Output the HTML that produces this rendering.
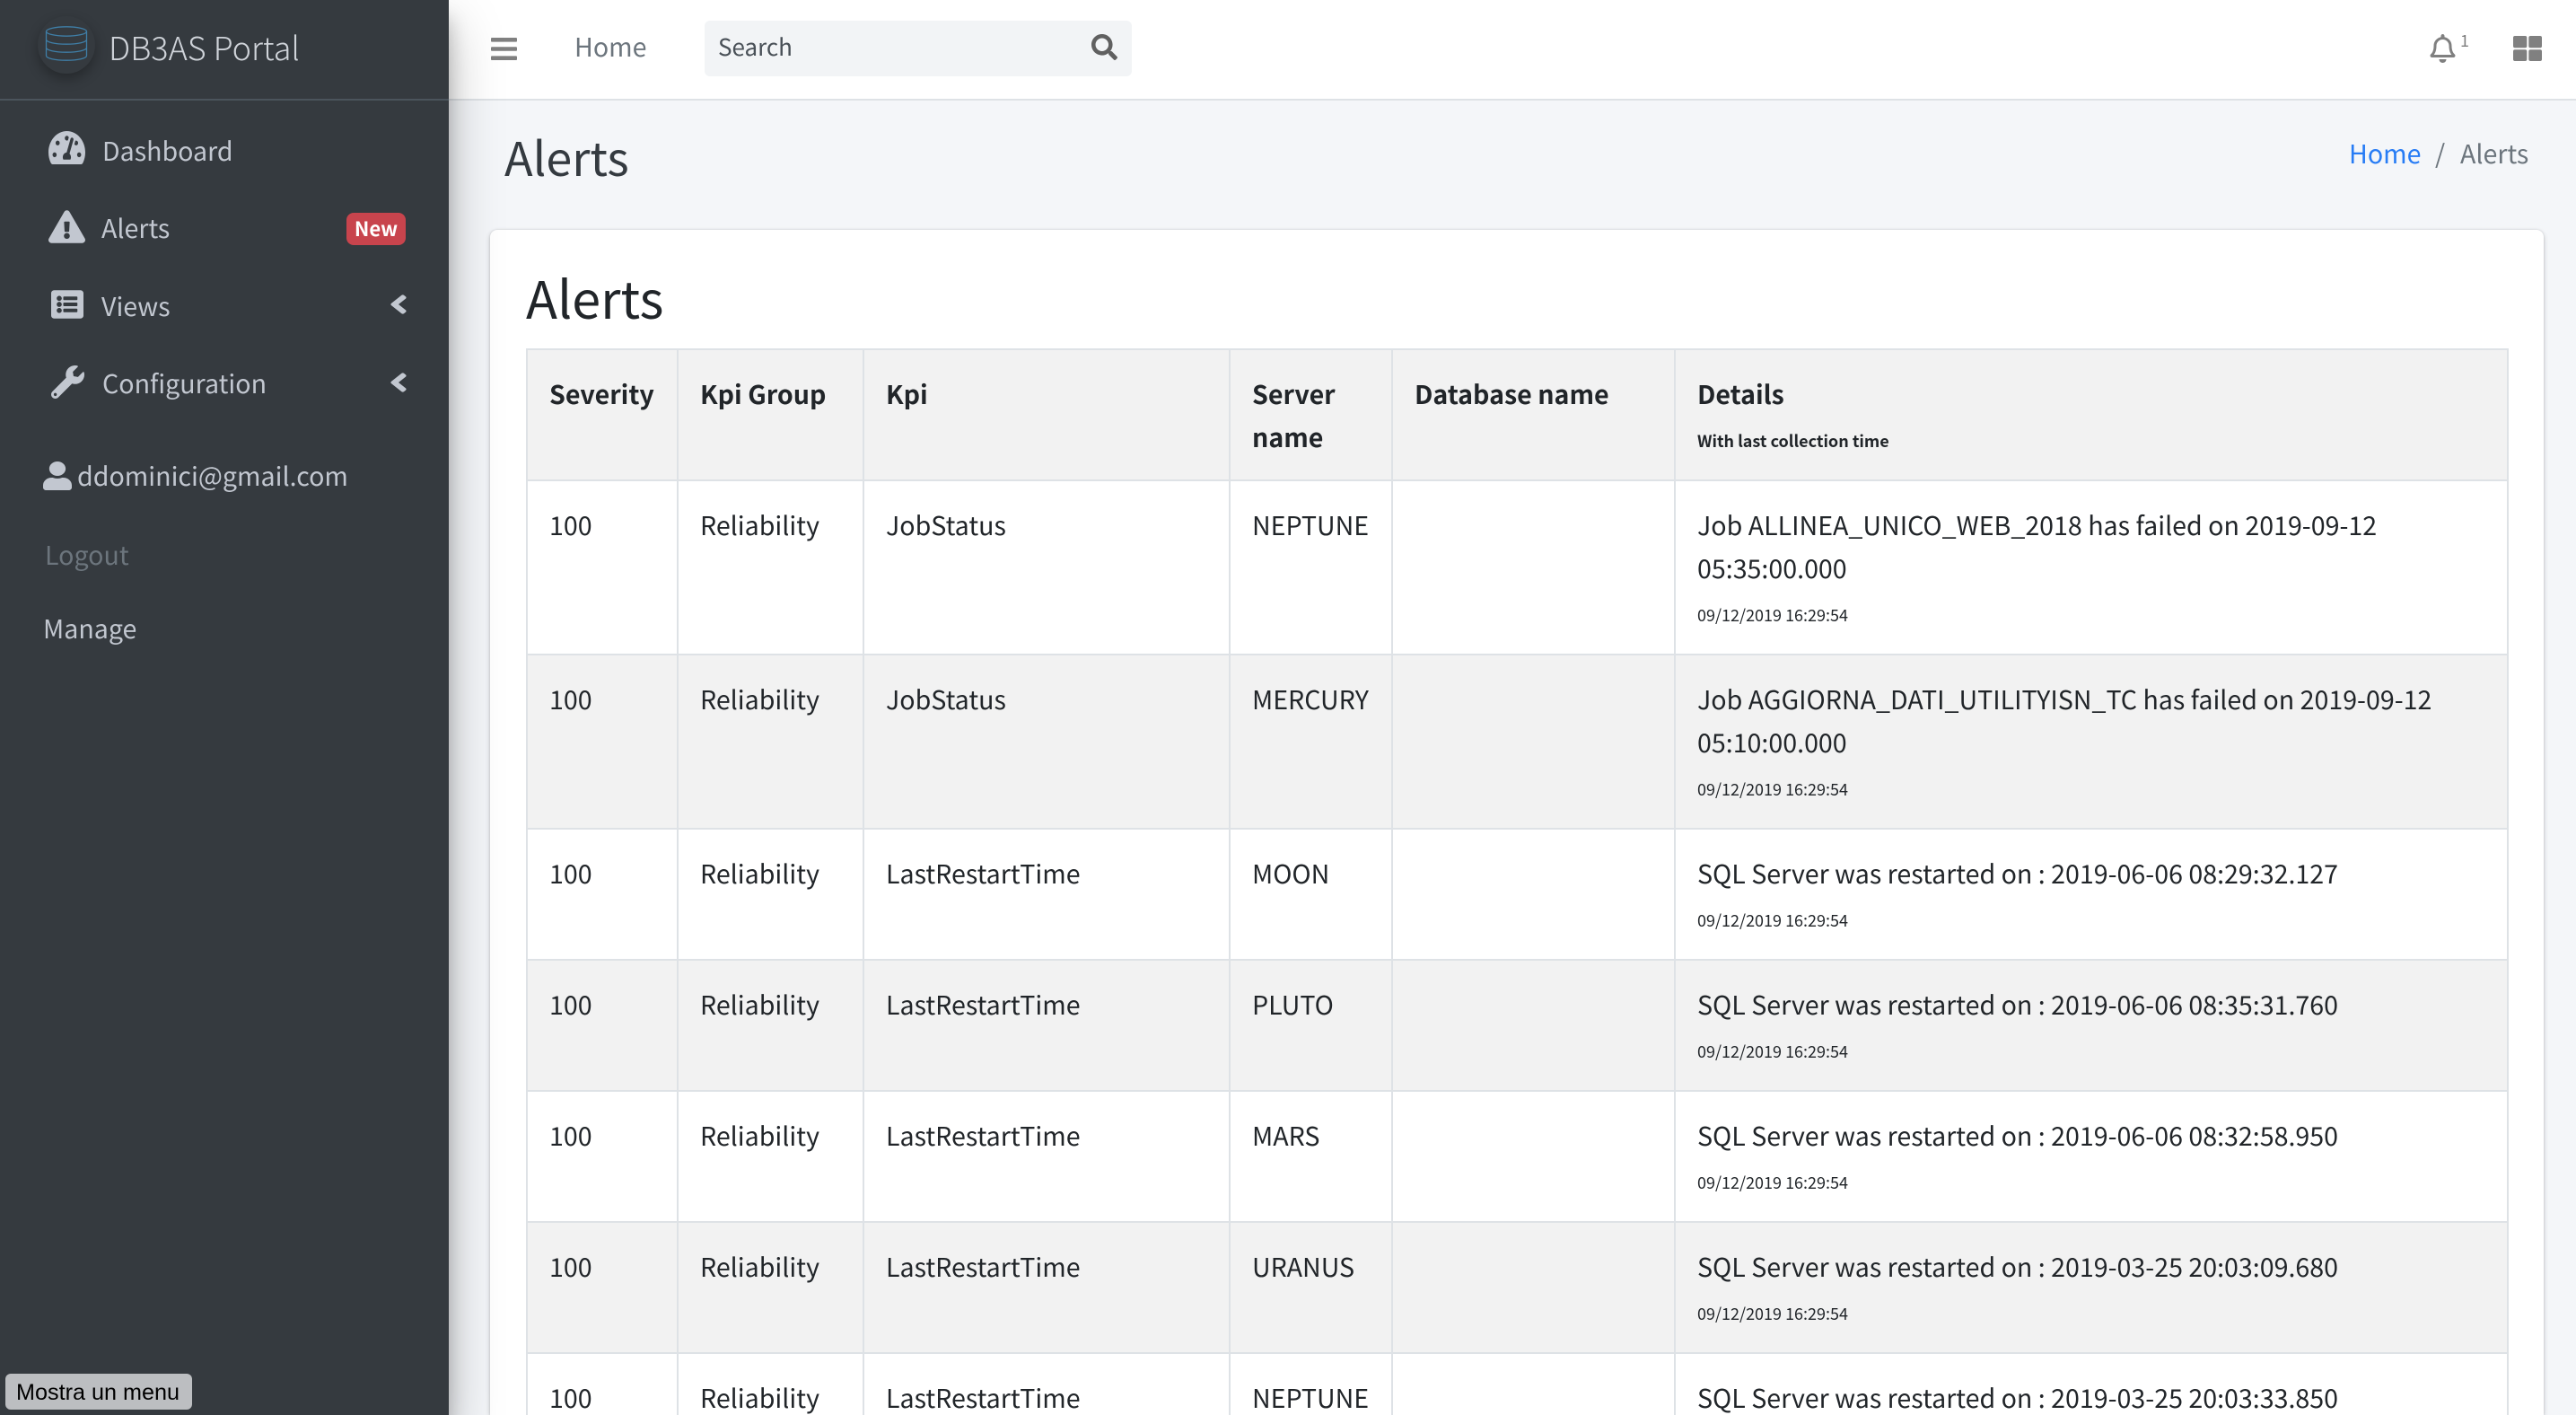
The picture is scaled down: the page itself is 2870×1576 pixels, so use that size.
<!DOCTYPE html>
<html lang="en"><head><meta charset="utf-8"><title>Alerts - DB3AS Portal</title>
<style>
*{box-sizing:border-box}
html,body{margin:0;padding:0;width:2870px;height:1576px;overflow:hidden;background:#f4f6f9}
body{position:relative;font-family:"Noto Sans CJK JP","Liberation Sans",sans-serif;font-size:28.6px;color:#212529}
.a{position:absolute;white-space:nowrap;line-height:48px}
svg{position:absolute;display:block}
#top{position:absolute;left:0;top:0;width:2870px;height:112px;background:#fff;border-bottom:2px solid #dee2e6}
#side{position:absolute;left:0;top:0;width:500px;height:1576px;background:#353a3f;box-shadow:0 28px 56px rgba(0,0,0,.25),0 20px 20px rgba(0,0,0,.22)}
#side .m{color:#c2c7d0}
#brandline{position:absolute;left:0;top:110px;width:500px;height:2px;background:#4b545c}
#logo{position:absolute;left:42px;top:18px;width:64px;height:64px;border-radius:50%;background:#353a3f;box-shadow:0 6px 14px rgba(0,0,0,.3)}
#badge{position:absolute;left:386px;top:237px;width:66px;height:36px;border-radius:8px;background:#c8444d;color:#fff;font-weight:700;font-size:22px;line-height:35px;text-align:center}
#search{position:absolute;left:785px;top:23px;width:476px;height:62px;border-radius:6px;background:#f2f4f6}
#card{position:absolute;left:546px;top:256px;width:2288px;height:1320px;overflow:hidden;background:#fff;border-radius:8px 8px 0 0;box-shadow:0 0 2px rgba(0,0,0,.125),0 2px 6px rgba(0,0,0,.2)}
#tip{position:absolute;left:6px;top:1530px;width:208px;height:40px;border-radius:6px;background:#bcbec1;color:#000;font-family:"Liberation Sans",sans-serif;font-size:25.2px;line-height:42px;padding-left:12px;white-space:nowrap}
table{position:absolute;left:40px;top:132px;width:2207px;table-layout:fixed;border-collapse:collapse;line-height:48px}
td,th{border:2px solid #dee2e6;padding:25px 24px 0;vertical-align:top;text-align:left;overflow:hidden}
th{font-weight:700}
.s{background:#f2f2f2}
small{font-size:18px}
th small{font-weight:700}
tr.h{height:146px}tr.t{height:194px}
</style></head><body>
<div id="top"></div>
<svg style="left:547px;top:42px" width="29" height="25" viewBox="0 60 448 392" preserveAspectRatio="none"><path fill="#808080" d="M16 132h416c8.837 0 16-7.163 16-16V76c0-8.837-7.163-16-16-16H16C7.163 60 0 67.163 0 76v40c0 8.837 7.163 16 16 16zm0 160h416c8.837 0 16-7.163 16-16v-40c0-8.837-7.163-16-16-16H16c-8.837 0-16 7.163-16 16v40c0 8.837 7.163 16 16 16zm0 160h416c8.837 0 16-7.163 16-16v-40c0-8.837-7.163-16-16-16H16c-8.837 0-16 7.163-16 16v40c0 8.837 7.163 16 16 16z"/></svg>
<div class="a" style="left:640px;top:28px;color:#6c757d">Home</div>
<div id="search"></div>
<div class="a" style="left:800px;top:28px;font-size:26px;color:#495057">Search</div>
<svg style="left:1216px;top:38px" width="29" height="29" viewBox="0 0 512 512"><path fill="#606060" d="M505 442.7L405.3 343c-4.5-4.5-10.6-7-17-7H372c27.6-35.3 44-79.7 44-128C416 93.1 322.9 0 208 0S0 93.1 0 208s93.1 208 208 208c48.3 0 92.7-16.4 128-44v16.3c0 6.4 2.5 12.5 7 17l99.7 99.7c9.4 9.4 24.6 9.4 33.9 0l28.3-28.3c9.4-9.4 9.4-24.6.1-34zM208 336c-70.7 0-128-57.2-128-128 0-70.7 57.2-128 128-128 70.7 0 128 57.2 128 128 0 70.7-57.2 128-128 128z"/></svg>
<svg style="left:2707px;top:38px" width="29" height="32" viewBox="0 0 448 512"><path fill="#808080" d="M439.39 362.29c-19.32-20.76-55.47-51.99-55.47-154.29 0-77.7-54.48-139.9-127.94-155.16V32c0-17.67-14.32-32-31.98-32s-31.98 14.33-31.98 32v20.84C118.56 68.1 64.08 130.3 64.08 208c0 102.3-36.15 133.53-55.47 154.29-6 6.45-8.66 14.16-8.61 21.71.11 16.4 12.98 32 32.1 32h383.8c19.12 0 32-15.6 32.1-32 .05-7.55-2.61-15.27-8.61-21.71zM67.53 368c21.22-27.97 44.42-74.33 44.53-159.42 0-.2-.06-.38-.06-.58 0-61.86 50.14-112 112-112s112 50.14 112 112c0 .2-.06.38-.06.58.11 85.1 23.31 131.46 44.53 159.42H67.53zM224 512c35.32 0 63.97-28.65 63.97-64H160.03c0 35.35 28.65 64 63.97 64z"/></svg>
<div class="a" style="left:2741px;top:21px;font-size:18px;color:#808080">1</div>
<svg style="left:2800px;top:40px" width="32" height="28" viewBox="0 0 32 28"><g fill="#808080"><rect x="0" y="0" width="15.3" height="13.3" rx="2"/><rect x="17.3" y="0" width="14.7" height="13.3" rx="2"/><rect x="0" y="15.3" width="15.3" height="12.7" rx="2"/><rect x="17.3" y="15.3" width="14.7" height="12.7" rx="2"/></g></svg>

<div class="a" style="left:562px;top:142px;font-size:52px;line-height:64px;color:#343a40">Alerts</div>
<div class="a" style="left:2617px;top:147px;color:#277cf5">Home</div>
<div class="a" style="left:2713px;top:147px;color:#6c757d">/</div>
<div class="a" style="left:2741px;top:147px;color:#6c757d">Alerts</div>

<div id="card">
<div class="a" style="left:40px;top:38px;font-size:57.5px;line-height:72px;color:#212529">Alerts</div>
<table>
<colgroup><col style="width:168px"><col style="width:207px"><col style="width:408px"><col style="width:181px"><col style="width:315px"><col style="width:928px"></colgroup>
<tr class="h s"><th>Severity</th><th>Kpi Group</th><th>Kpi</th><th>Server name</th><th>Database name</th><th>Details<br><small>With last collection time</small></th></tr>
<tr class="t"><td>100</td><td>Reliability</td><td>JobStatus</td><td>NEPTUNE</td><td></td><td>Job ALLINEA_UNICO_WEB_2018 has failed on 2019-09-12 05:35:00.000<br><small>09/12/2019 16:29:54</small></td></tr>
<tr class="t s"><td>100</td><td>Reliability</td><td>JobStatus</td><td>MERCURY</td><td></td><td>Job AGGIORNA_DATI_UTILITYISN_TC has failed on 2019-09-12 05:10:00.000<br><small>09/12/2019 16:29:54</small></td></tr>
<tr class="h"><td>100</td><td>Reliability</td><td>LastRestartTime</td><td>MOON</td><td></td><td>SQL Server was restarted on : 2019-06-06 08:29:32.127<br><small>09/12/2019 16:29:54</small></td></tr>
<tr class="h s"><td>100</td><td>Reliability</td><td>LastRestartTime</td><td>PLUTO</td><td></td><td>SQL Server was restarted on : 2019-06-06 08:35:31.760<br><small>09/12/2019 16:29:54</small></td></tr>
<tr class="h"><td>100</td><td>Reliability</td><td>LastRestartTime</td><td>MARS</td><td></td><td>SQL Server was restarted on : 2019-06-06 08:32:58.950<br><small>09/12/2019 16:29:54</small></td></tr>
<tr class="h s"><td>100</td><td>Reliability</td><td>LastRestartTime</td><td>URANUS</td><td></td><td>SQL Server was restarted on : 2019-03-25 20:03:09.680<br><small>09/12/2019 16:29:54</small></td></tr>
<tr class="h"><td>100</td><td>Reliability</td><td>LastRestartTime</td><td>NEPTUNE</td><td></td><td>SQL Server was restarted on : 2019-03-25 20:03:33.850<br><small>09/12/2019 16:29:54</small></td></tr>
</table>
</div>

<div id="side">
<div id="brandline"></div>
<div id="logo"></div>
<svg style="left:50px;top:28px" width="48" height="44" viewBox="0 0 48 44"><g fill="none" stroke="#3f7fa8" stroke-width="1.3"><ellipse cx="24" cy="7" rx="22.5" ry="5.2"/><path d="M1.5 7v9c0 3 10 5.2 22.5 5.2S46.500 19 46.500 16V7M1.500 16v9c0 3 10 5.200 22.500 5.200S46.500 28 46.500 25v-9M1.500 25v9c0 3 10 5.200 22.500 5.200S46.500 37 46.500 34v-9"/></g></svg>
<div class="a" style="left:121px;top:28px;font-size:36px;font-weight:300;color:#d0d4da">DB3AS Portal</div>

<svg style="left:54px;top:146px" width="41" height="37" viewBox="0 32 576 448" preserveAspectRatio="none"><path fill="#c2c7d0" d="M288 32C128.94 32 0 160.94 0 320c0 52.8 14.25 102.26 39.06 144.8 5.61 9.62 16.3 15.2 27.44 15.2h443c11.14 0 21.83-5.58 27.44-15.2C561.75 422.26 576 372.8 576 320c0-159.06-128.94-288-288-288zm0 64c14.71 0 26.58 10.13 30.32 23.65-1.11 2.26-2.64 4.23-3.45 6.67l-9.22 27.67c-5.13 3.49-10.97 6.01-17.64 6.01-17.67 0-32-14.33-32-32S270.33 96 288 96zM96 384c-17.67 0-32-14.33-32-32s14.33-32 32-32 32 14.33 32 32-14.33 32-32 32zm48-160c-17.67 0-32-14.33-32-32s14.33-32 32-32 32 14.33 32 32-14.33 32-32 32zm246.77-72.41l-61.33 184C343.13 347.33 352 364.54 352 384c0 11.72-3.38 22.55-8.88 32H232.88c-5.5-9.45-8.88-20.28-8.88-32 0-33.94 26.5-61.43 59.9-63.59l61.34-184.01c4.17-12.56 17.73-19.45 30.36-15.17 12.57 4.19 19.35 17.79 15.17 30.36zm14.66 57.2l15.52-46.55c3.47-1.29 7.13-2.23 11.05-2.23 17.67 0 32 14.33 32 32s-14.33 32-32 32c-11.38-.01-20.89-6.28-26.57-15.22zM480 384c-17.67 0-32-14.33-32-32s14.33-32 32-32 32 14.33 32 32-14.33 32-32 32z"/></svg>
<div class="a m" style="left:114px;top:144px">Dashboard</div>

<svg style="left:54px;top:234px" width="41" height="37" viewBox="0 0 576 512"><path fill="#c2c7d0" d="M569.517 440.013C587.975 472.007 564.806 512 527.94 512H48.054c-36.937 0-59.999-40.055-41.577-71.987L246.423 23.985c18.467-32.009 64.72-31.951 83.154 0l239.94 416.028zM288 354c-25.405 0-46 20.595-46 46s20.595 46 46 46 46-20.595 46-46-20.595-46-46-46zm-43.673-165.346l7.418 136c.347 6.364 5.609 11.346 11.982 11.346h48.546c6.373 0 11.635-4.982 11.982-11.346l7.418-136c.375-6.874-5.098-12.654-11.982-12.654h-63.383c-6.884 0-12.356 5.78-11.981 12.654z"/></svg>
<div class="a m" style="left:113px;top:230px">Alerts</div>
<div id="badge">New</div>

<svg style="left:57px;top:323px" width="36" height="32" viewBox="0 32 512 448"><path fill="#c2c7d0" d="M464 480H48c-26.51 0-48-21.49-48-48V80c0-26.51 21.49-48 48-48h416c26.51 0 48 21.49 48 48v352c0 26.51-21.49 48-48 48zM128 120c-22.091 0-40 17.909-40 40s17.909 40 40 40 40-17.909 40-40-17.909-40-40-40zm0 96c-22.091 0-40 17.909-40 40s17.909 40 40 40 40-17.909 40-40-17.909-40-40-40zm0 96c-22.091 0-40 17.909-40 40s17.909 40 40 40 40-17.909 40-40-17.909-40-40-40zm288-136v-32c0-6.627-5.373-12-12-12H204c-6.627 0-12 5.373-12 12v32c0 6.627 5.373 12 12 12h200c6.627 0 12-5.373 12-12zm0 96v-32c0-6.627-5.373-12-12-12H204c-6.627 0-12 5.373-12 12v32c0 6.627 5.373 12 12 12h200c6.627 0 12-5.373 12-12zm0 96v-32c0-6.627-5.373-12-12-12H204c-6.627 0-12 5.373-12 12v32c0 6.627 5.373 12 12 12h200c6.627 0 12-5.373 12-12z"/></svg>
<div class="a m" style="left:113px;top:317px">Views</div>
<svg style="left:435px;top:328px" width="18" height="22" viewBox="20 90 216 332" preserveAspectRatio="none"><path fill="#c2c7d0" d="M31.7 239l136-136c9.4-9.4 24.600-9.400 33.900 0l22.600 22.600c9.400 9.400 9.400 24.600 0 33.900L127.900 256l96.400 96.400c9.400 9.400 9.400 24.600 0 33.900L201.700 409c-9.400 9.400-24.600 9.400-33.900 0l-136-136c-9.500-9.400-9.500-24.600-.1-34z"/></svg>

<svg style="left:57px;top:407px" width="37" height="37" viewBox="0 0 512 512"><path fill="#c2c7d0" d="M507.730 109.100c-2.240-9.030-13.540-12.090-20.120-5.510l-74.360 74.360-67.880-11.310-11.310-67.880 74.360-74.360c6.620-6.620 3.430-17.900-5.660-20.160-47.380-11.740-99.550.91-136.580 37.930-39.640 39.640-50.550 97.100-34.050 147.200L18.740 402.760c-24.990 24.990-24.990 65.510 0 90.500 24.990 24.990 65.510 24.990 90.500 0l213.210-213.210c50.120 16.710 107.470 5.680 147.370-34.220 37.070-37.070 49.700-89.320 37.910-136.730zM64 472c-13.250 0-24-10.750-24-24 0-13.260 10.750-24 24-24s24 10.740 24 24c0 13.250-10.750 24-24 24z"/></svg>
<div class="a m" style="left:114px;top:403px">Configuration</div>
<svg style="left:435px;top:415px" width="18" height="22" viewBox="20 90 216 332" preserveAspectRatio="none"><path fill="#c2c7d0" d="M31.7 239l136-136c9.4-9.4 24.600-9.400 33.900 0l22.600 22.600c9.400 9.400 9.400 24.600 0 33.900L127.900 256l96.400 96.400c9.400 9.400 9.400 24.600 0 33.900L201.700 409c-9.400 9.400-24.600 9.400-33.900 0l-136-136c-9.500-9.400-9.500-24.600-.1-34z"/></svg>

<svg style="left:48px;top:514px" width="32" height="32" viewBox="0 0 448 512" preserveAspectRatio="none"><path fill="#c2c7d0" d="M224 256c70.700 0 128-57.300 128-128S294.700 0 224 0 96 57.300 96 128s57.300 128 128 128zm89.600 32h-16.700c-22.200 10.200-46.900 16-72.900 16s-50.600-5.800-72.900-16h-16.700C60.200 288 0 348.200 0 422.400V464c0 26.500 21.500 48 48 48h352c26.500 0 48-21.500 48-48v-41.600c0-74.200-60.200-134.400-134.400-134.400z"/></svg>
<div class="a m" style="left:86px;top:506px">ddominici@gmail.com</div>
<div class="a" style="left:50px;top:594px;color:#6c757d">Logout</div>
<div class="a m" style="left:48px;top:676px">Manage</div>
</div>
<div id="tip">Mostra un menu</div>
</body></html>
